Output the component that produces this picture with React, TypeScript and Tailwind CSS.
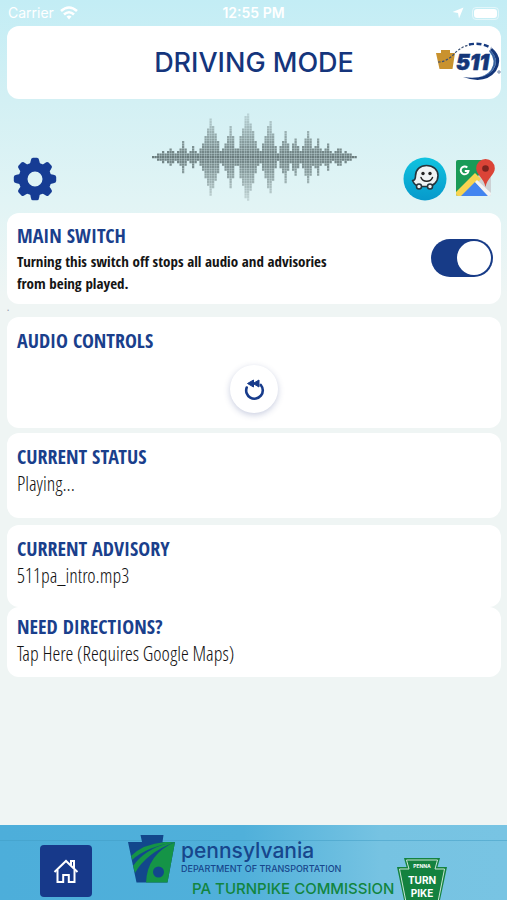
import { useState, type ReactNode } from "react";

// Half height of every column in the sound wave, counted in dots
const WAVE = [
  0, 0, 1, 1, 2, 1, 2, 3, 2, 1, 2, 3, 6, 3, 1, 2, 4, 2, 1, 3, 5, 8, 11, 15, 12,
  9, 6, 2, 3, 5, 8, 12, 8, 3, 3, 8, 11, 16, 17, 13, 10, 6, 3, 2, 5, 8, 12, 14,
  9, 4, 1, 4, 6, 10, 5, 2, 5, 7, 4, 2, 4, 7, 10, 7, 3, 4, 7, 3, 2, 3, 5, 2, 1,
  2, 3, 3, 1, 2, 1, 1, 0, 0,
];

const CONDENSED =
  "font-['Open_Sans_Condensed','Liberation_Sans_Narrow','Liberation_Sans',sans-serif]";
const CONDENSED_LIGHT =
  "font-['Open_Sans_Condensed_Light','Open_Sans_Condensed','Liberation_Sans_Narrow','Liberation_Sans',sans-serif] font-light";

function SoundWave() {
  return (
    <svg viewBox="0 0 820 360" className="w-[205px] h-[90px]" aria-hidden="true">
      {WAVE.map((half, x) =>
        Array.from({ length: half * 2 + 1 }, (_, i) => {
          const y = i - half;
          return (
            <rect
              key={`${x}-${i}`}
              x={x * 10}
              y={172 + y * 10}
              width={9}
              height={9}
              fill="#5d6f70"
              opacity={Math.max(0.2, 0.9 - Math.abs(y) * 0.04)}
            />
          );
        })
      )}
    </svg>
  );
}

function GearIcon() {
  return (
    <svg viewBox="0 0 44 44" className="size-11" aria-hidden="true">
      <g fill="#163c94">
        {[0, 45, 90, 135, 180, 225, 270, 315].map((a) => (
          <path
            key={a}
            d="M14.500 10.500Q17.500 8 17.800 3.500Q18 .8 20 .8H24Q26 .8 26.200 3.500Q26.500 8 29.500 10.500Z"
            transform={`rotate(${a} 22 22)`}
          />
        ))}
        <path
          fillRule="evenodd"
          d="M22 5.500a16.500 16.500 0 1 0 0 33a16.500 16.500 0 1 0 0-33ZM22 14.500a7.500 7.500 0 1 1 0 15a7.500 7.500 0 1 1 0-15Z"
        />
      </g>
    </svg>
  );
}

function WazeIcon() {
  return (
    <svg viewBox="0 0 44 44" className="size-11" aria-hidden="true">
      <defs>
        <linearGradient id="waze" x1="0" y1="0" x2="0" y2="1">
          <stop offset="0" stopColor="#10c3e0" />
          <stop offset="1" stopColor="#0799cb" />
        </linearGradient>
      </defs>
      <circle cx="22" cy="22" r="21.500" fill="url(#waze)" />
      <path
        d="M9.500 23.500C12 23.500 12.500 22 12.500 19C12.500 12.500 17 8.500 23.500 8.500C30.500 8.500 35 13 35 18.500C35 25 30.500 29.500 24 29.500H18C14 29.500 11 27 9.500 23.500Z"
        fill="#eff3f4"
        stroke="#26343b"
        strokeWidth="1.600"
        strokeLinejoin="round"
      />
      <circle cx="20" cy="16.500" r="1.700" fill="#222" />
      <circle cx="27" cy="16.500" r="1.700" fill="#222" />
      <path d="M18 20.500C20 25.500 27.500 25.500 29.500 20.500" fill="none" stroke="#222" strokeWidth="1.500" strokeLinecap="round" />
      <circle cx="16" cy="29.500" r="2.500" fill="#eff3f4" stroke="#26343b" strokeWidth="1.500" />
      <circle cx="27" cy="29.500" r="2.500" fill="#eff3f4" stroke="#26343b" strokeWidth="1.500" />
    </svg>
  );
}

function GoogleMapsIcon() {
  return (
    <svg viewBox="0 0 40 40" className="size-10" aria-hidden="true">
      <clipPath id="map">
        <rect x="1" y="1" width="35" height="36" rx="2" />
      </clipPath>
      <g clipPath="url(#map)">
        <rect x="1" y="1" width="36" height="37" fill="#cdd1d4" />
        <path d="M1 1H27L24 16L1 38Z" fill="#199b58" />
        <path d="M1 33L20 14L26 20L7 38H1Z" fill="#f7d351" />
        <path d="M5 38L20 23L34 38Z" fill="#4385f0" />
        <path d="M20 23L22 21L37 35V38H34Z" fill="#f3f3f3" />
      </g>
      <path d="M12.300 8.500A3.900 3.900 0 1 0 13.500 12H9.800" fill="none" stroke="#fff" strokeWidth="1.900" />
      <path
        d="M30.500 0A9.300 9.300 0 0 0 21.200 9.500C21.200 16 29 19 30.500 28C32 19 39.800 16 39.800 9.500A9.300 9.300 0 0 0 30.500 0Z"
        fill="#db4437"
      />
      <circle cx="30.500" cy="9.500" r="3.300" fill="#7b231e" />
    </svg>
  );
}

function Logo511() {
  return (
    <svg viewBox="0 0 66 42" className="w-[66px] h-[42px]" role="img" aria-label="511">
      <path d="M6 8H15V11H20L17.500 27H4.500L1 11H6Z" fill="#c9922e" />
      <path d="M3 20Q12 20 20 11Q27 4 36 2.500" fill="none" stroke="#3a4f73" strokeWidth="1.200" strokeDasharray="2.500 1.500" />
      <path d="M34 2.500Q46 0 56 6" fill="none" stroke="#173b80" strokeWidth="2.400" strokeDasharray="5 2.500" />
      <text x="21" y="28" fontSize="21" fontWeight="900" fontStyle="italic" fill="#143679" stroke="#143679" strokeWidth=".6" className="font-['Inter',sans-serif]">
        511
      </text>
      <path d="M55 8Q65 18 58 28Q49 38 28 35Q50 43 61 29Q69 16 57 6Z" fill="#143679" />
      <path d="M54 9Q62 19 56 28Q51 34 43 35Q53 34 58 28Q65 17 55 8Z" fill="#3762a0" />
      <circle cx="64" cy="30" r="1.200" fill="none" stroke="#486493" strokeWidth=".8" />
    </svg>
  );
}

function ReplayIcon() {
  return (
    <svg viewBox="0 0 24 24" className="size-6" aria-hidden="true">
      <path d="M4.700 10.500A8.300 8.300 0 1 0 18.800 8" fill="none" stroke="#173b8b" strokeWidth="2.600" strokeLinecap="round" />
      <path d="M11.500 3V10L5.500 6.500ZM17 3V10L11 6.500Z" fill="#173b8b" stroke="#173b8b" strokeWidth="1" strokeLinejoin="round" />
    </svg>
  );
}

function HomeIcon() {
  return (
    <svg viewBox="0 0 26 26" className="size-[26px]" fill="none" stroke="#fff" strokeWidth="2" aria-hidden="true">
      <path d="M1.500 14L13 3L24.500 14" />
      <path d="M4.500 12V24H10.200V17H15.800V24H21.500V12" />
      <path d="M18 7V3H21V10" />
    </svg>
  );
}

function PennDotKeystone() {
  return (
    <svg viewBox="0 0 48 48" className="size-12" aria-hidden="true">
      <clipPath id="keystone">
        <path d="M12.500 0H35.500L34.500 7H47L39.500 47.500H8.500L0 7H14Z" />
      </clipPath>
      <g clipPath="url(#keystone)">
        <rect width="48" height="48" fill="#12478c" />
        <path d="M47 7Q19 19 18 48H48V7Z" fill="#159447" />
        <path d="M3 21Q15 9 37 7H47Q18 12 4 25Z" fill="#159447" />
        <path d="M5 31Q17 14 41 8L47 7Q18 18 7 38Z" fill="#159447" />
        <circle cx="30.500" cy="37" r="5.500" fill="#12478c" />
      </g>
    </svg>
  );
}

function TurnpikeBadge() {
  return (
    <svg viewBox="0 0 50 42" className="w-[50px] h-[42px]" role="img" aria-label="Penna Turn Pike">
      <path d="M7 0H43L40.500 9H50L43 42H7L0 9H9.500Z" fill="#14823f" />
      <path d="M9.500 2H40.500L38 11H47.500L41 44H9L2.500 11H12Z" fill="none" stroke="#c8e6d4" strokeWidth="1" />
      <g fill="#fff" textAnchor="middle" fontWeight="700" className="font-['Inter',sans-serif]">
        <text x="25" y="10" fontSize="5">PENNA</text>
        <text x="25" y="25.500" fontSize="10">TURN</text>
        <text x="25" y="38.500" fontSize="10">PIKE</text>
      </g>
    </svg>
  );
}

function Card({ title, className, children }: { title: string; className: string; children: ReactNode }) {
  return (
    <section className={`bg-white rounded-xl px-2.5 ${className}`}>
      <h2 className="text-[20px] leading-6 font-bold text-[#1a3f8c]">{title}</h2>
      {children}
    </section>
  );
}

export default function App() {
  const [enabled, setEnabled] = useState(true);

  return (
    <div
      className={`min-h-screen flex flex-col bg-[#eff5f4] bg-[linear-gradient(#c3edf5_0px,#d3f0f4_100px,#e1f4f5_200px,#eff5f4_300px)] ${CONDENSED}`}
    >
      <div className="grid grid-cols-3 items-center h-[26px] px-2 text-sm text-white font-['Inter',sans-serif]">
        <div className="flex items-center gap-1.5">
          <span>Carrier</span>
          <svg viewBox="0 0 18 14" className="w-[18px] h-3.5" fill="none" stroke="#fff" strokeWidth="2.600" aria-hidden="true">
            <path d="M1 5Q9-2 17 5M4 8.500Q9 4 14 8.500" />
            <path d="M6.500 10.500Q9 8.500 11.500 10.500L9 13.500Z" fill="#fff" stroke="none" />
          </svg>
        </div>
        <span className="text-center font-semibold">12:55 PM</span>
        <div className="flex items-center justify-end gap-2">
          <svg viewBox="0 0 12 12" className="size-3" fill="#fff" aria-hidden="true">
            <path d="M11.500 .5L7 11.500L6 6L.5 5Z" />
          </svg>
          <span className="w-[27px] h-[13px] rounded border border-white/50 p-px">
            <span className="block h-full w-[23px] rounded-[3px] bg-white" />
          </span>
        </div>
      </div>

      <main className="flex-1 flex flex-col pl-[7px] pr-1.5 pb-8">
        <header className="grid grid-cols-[66px_1fr_66px] items-center h-[73px] bg-white rounded-xl">
          <h1 className="col-start-2 text-center text-[27px] leading-8 text-[#15357c] font-medium font-['Inter',sans-serif]">
            DRIVING MODE
          </h1>
          <Logo511 />
        </header>

        <div className="grid grid-cols-[1fr_auto_1fr] items-end h-[114px] px-1.5 pb-3">
          <button type="button" aria-label="Settings" className="justify-self-start pb-0.5">
            <GearIcon />
          </button>
          <div className="self-start pt-3.5">
            <SoundWave />
          </div>
          <div className="flex items-center justify-end gap-2 pb-0.5">
            <a href="#waze" aria-label="Waze">
              <WazeIcon />
            </a>
            <a href="#maps" aria-label="Google Maps">
              <GoogleMapsIcon />
            </a>
          </div>
        </div>

        <Card title="MAIN SWITCH" className="pt-[11px] pb-2.5">
          <div className="flex justify-between">
            <label htmlFor="main-switch" className="pt-0.5 max-w-[330px] text-[15px] leading-[22px] font-bold text-[#151515]">
              Turning this switch off stops all audio and advisories from being played.
            </label>
            <input
              id="main-switch"
              type="checkbox"
              role="switch"
              checked={enabled}
              onChange={(e) => setEnabled(e.target.checked)}
              className="appearance-none shrink-0 -mt-[9px] -mr-0.5 w-[62px] h-[38px] rounded-full bg-gray-300 checked:bg-[#173b87] p-0.5 before:block before:size-[34px] before:rounded-full before:bg-white checked:before:ml-6"
            />
          </div>
        </Card>

        <div className="h-[13px] text-[8px] leading-[8px] text-gray-400">.</div>

        <Card title="AUDIO CONTROLS" className="pt-3 pb-[15px]">
          <button
            type="button"
            aria-label="Replay"
            className="flex items-center justify-center mx-auto mt-3 size-12 rounded-full bg-white shadow-[0_2px_6px_rgba(40,60,130,0.25)]"
          >
            <ReplayIcon />
          </button>
        </Card>

        <Card title="CURRENT STATUS" className="mt-[5px] pt-3 pb-[22px]">
          <p className={`mt-[3px] text-[20px] leading-6 text-[#111] ${CONDENSED_LIGHT}`}>Playing...</p>
        </Card>

        <Card title="CURRENT ADVISORY" className="mt-[7px] pt-3 pb-[19px]">
          <p className={`mt-[3px] text-[20px] leading-6 text-[#111] ${CONDENSED_LIGHT}`}>511pa_intro.mp3</p>
        </Card>

        <Card title="NEED DIRECTIONS?" className="pt-2 pb-[11px]">
          <a href="#directions" className={`block mt-[3px] text-[20px] leading-6 text-[#111] ${CONDENSED_LIGHT}`}>
            Tap Here (Requires Google Maps)
          </a>
        </Card>
      </main>

      <footer className="relative flex h-[75px] pl-10 overflow-hidden bg-[linear-gradient(90deg,#4daeda_0%,#50b0da_48%,#76c3e2_75%,#78c4e3_100%)] font-['Inter',sans-serif]">
        <div className="absolute inset-x-0 top-[15px] h-px bg-[#3f9cc4]/50" />
        <button
          type="button"
          aria-label="Home"
          className="flex items-center justify-center shrink-0 mt-5 size-[52px] rounded bg-[#17398a]"
        >
          <HomeIcon />
        </button>
        <div className="relative shrink-0 ml-9 pt-2.5">
          <div className="flex gap-[5px] h-12">
            <PennDotKeystone />
            <div className="pt-1 text-[#17468c]">
              <p className="text-[21px] leading-6 font-medium">pennsylvania</p>
              <p className="text-[9px] leading-3 font-medium">DEPARTMENT OF TRANSPORTATION</p>
            </div>
          </div>
          <p className="-mt-1 pl-16 text-[15px] leading-5 font-medium text-[#12853f]">
            PA TURNPIKE COMMISSION
          </p>
        </div>
        <div className="relative shrink-0 self-end ml-[3px]">
          <TurnpikeBadge />
        </div>
      </footer>
    </div>
  );
}
